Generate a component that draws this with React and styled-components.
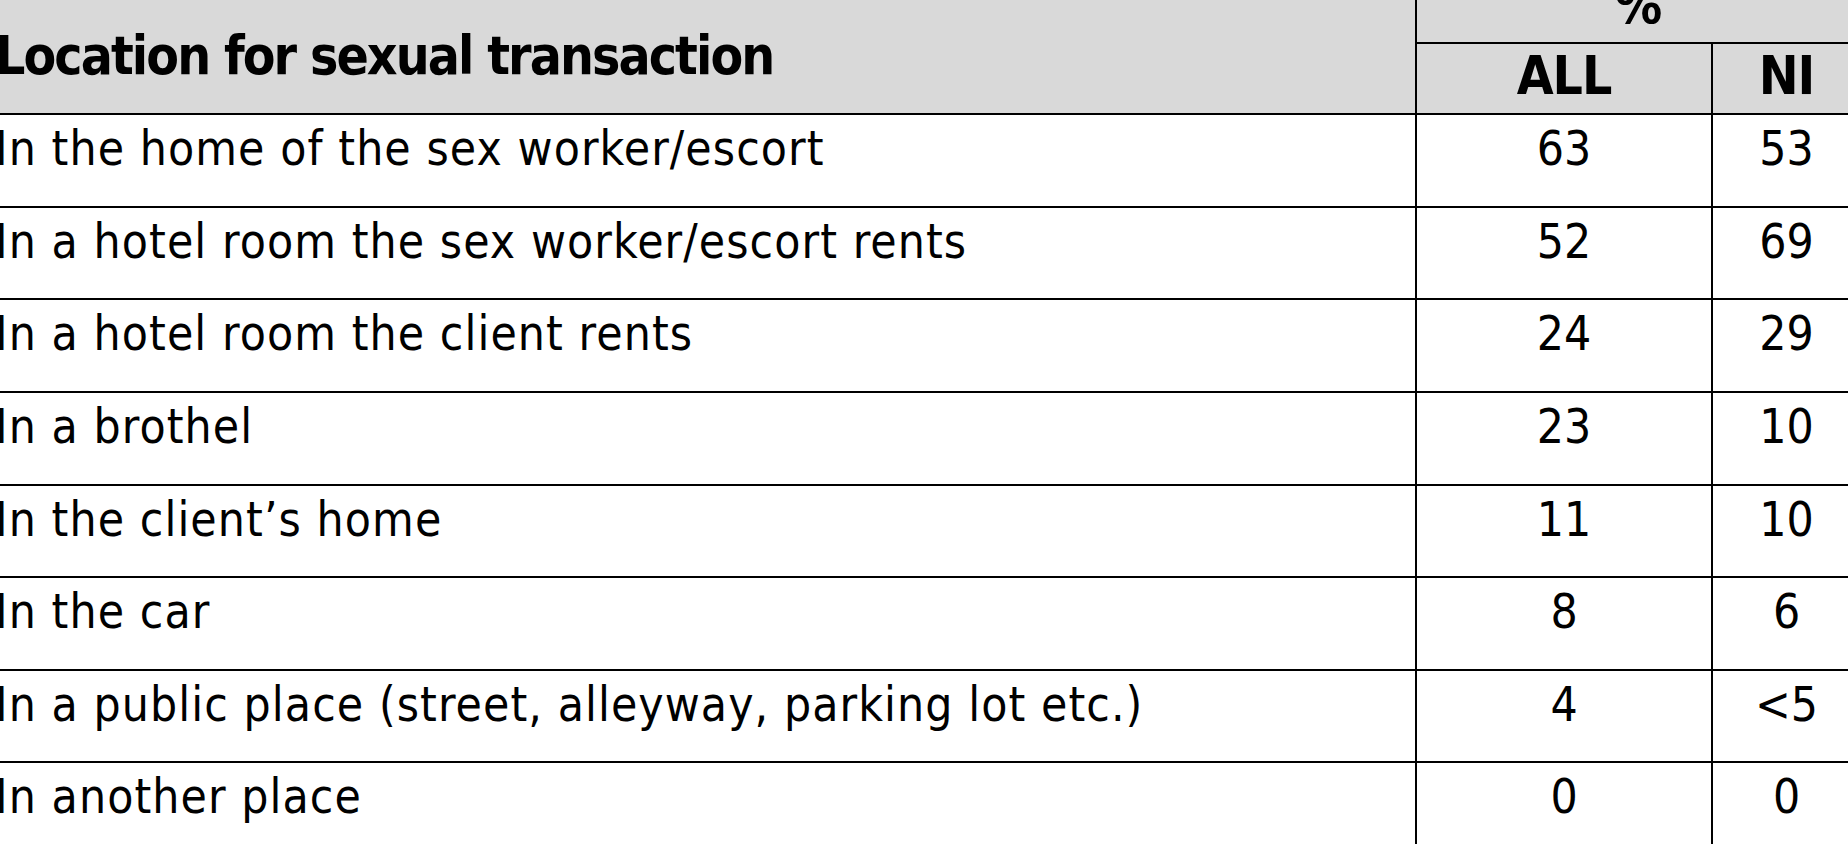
import React from "react";
import styled, { createGlobalStyle } from "styled-components";

const rows = [
  { label: "In the home of the sex worker/escort", all: "63", ni: "53" },
  { label: "In a hotel room the sex worker/escort rents", all: "52", ni: "69" },
  { label: "In a hotel room the client rents", all: "24", ni: "29" },
  { label: "In a brothel", all: "23", ni: "10" },
  { label: "In the client\u2019s home", all: "11", ni: "10" },
  { label: "In the car", all: "8", ni: "6" },
  { label: "In a public place (street, alleyway, parking lot etc.)", all: "4", ni: "<5" },
  { label: "In another place", all: "0", ni: "0" },
];

const App = () => {
  return (
    <>
      <GlobalStyle />
      <Table>
        <LabelHead>Location for sexual transaction</LabelHead>
        <PercentHead>%</PercentHead>
        <SubHead>ALL</SubHead>
        <SubHead>NI</SubHead>
        {rows.map((row, key) => (
          <React.Fragment key={key}>
            <Cell>{row.label}</Cell>
            <Cell numeric>{row.all}</Cell>
            <Cell numeric>{row.ni}</Cell>
          </React.Fragment>
        ))}
      </Table>
    </>
  );
};

export default App;

const GlobalStyle = createGlobalStyle`
  *, *::before, *::after {
    box-sizing: border-box;
  }

  html, body {
    margin: 0;
    background: #ffffff;
    overflow: hidden;
  }
`;

//TABLE GRID

const Table = styled.div`
  display: grid;
  grid-template-columns: 1420px 296px 149px;
  margin: -30px 0 0 -5px;
  font-family: "DejaVu Sans Condensed", "DejaVu Sans", sans-serif;
  font-stretch: semi-condensed;
  color: #000000;
`;

const HeadBase = styled.div`
  background: #d9d9d9;
  font-weight: bold;
  font-size: 53px;
  line-height: 62px;
  white-space: nowrap;
`;

const LabelHead = styled(HeadBase)`
  grid-row: span 2;
  padding-top: 55px;
  letter-spacing: -1.9px;
`;

const PercentHead = styled(HeadBase)`
  grid-column: span 2;
  height: 71.7px;
  padding-top: 3.7px;
  border-left: 2px solid #000000;
  text-align: center;
`;

const SubHead = styled(HeadBase)`
  height: 71.6px;
  padding-top: 1.3px;
  border-top: 2px solid #000000;
  border-left: 2px solid #000000;
  text-align: center;
  letter-spacing: -1px;
`;

const Cell = styled.div`
  height: 92.6px;
  padding-top: 6px;
  border-top: 2px solid #000000;
  border-left: ${(p) => (p.numeric ? "2px solid #000000" : "none")};
  text-align: ${(p) => (p.numeric ? "center" : "left")};
  letter-spacing: ${(p) => (p.numeric ? "0" : "1.08px")};
  font-size: 47.6px;
  line-height: 56px;
  white-space: nowrap;
`;
